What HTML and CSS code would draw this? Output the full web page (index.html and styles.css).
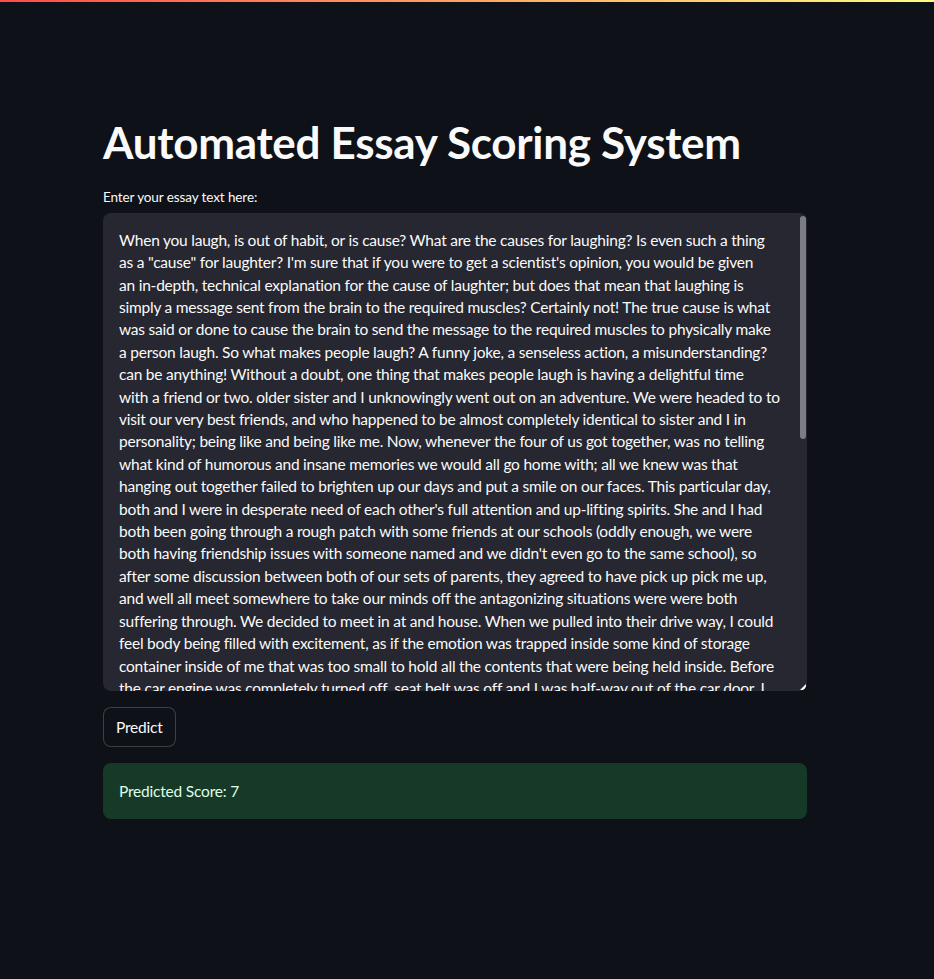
FILE: index.html
```html
<!DOCTYPE html>
<html lang="en">
<head>
<meta charset="utf-8">
<title>Automated Essay Scoring System</title>
<link rel="stylesheet" href="styles.css">
</head>
<body>
<div class="decoration"></div>
<main class="main">
  <h1 class="title">Automated Essay Scoring System</h1>
  <label class="label">Enter your essay text here:</label>
  <div class="textarea-wrap">
    <div class="textarea">
      <div>When you laugh, is out of habit, or is cause? What are the causes for laughing? Is even such a thing</div>
      <div>as a "cause" for laughter? I'm sure that if you were to get a scientist's opinion, you would be given</div>
      <div>an in-depth, technical explanation for the cause of laughter; but does that mean that laughing is</div>
      <div>simply a message sent from the brain to the required muscles? Certainly not! The true cause is what</div>
      <div>was said or done to cause the brain to send the message to the required muscles to physically make</div>
      <div>a person laugh. So what makes people laugh? A funny joke, a senseless action, a misunderstanding?</div>
      <div>can be anything! Without a doubt, one thing that makes people laugh is having a delightful time</div>
      <div>with a friend or two. older sister and I unknowingly went out on an adventure. We were headed to to</div>
      <div>visit our very best friends, and who happened to be almost completely identical to sister and I in</div>
      <div>personality; being like and being like me. Now, whenever the four of us got together, was no telling</div>
      <div>what kind of humorous and insane memories we would all go home with; all we knew was that</div>
      <div>hanging out together failed to brighten up our days and put a smile on our faces. This particular day,</div>
      <div>both and I were in desperate need of each other's full attention and up-lifting spirits. She and I had</div>
      <div>both been going through a rough patch with some friends at our schools (oddly enough, we were</div>
      <div>both having friendship issues with someone named and we didn't even go to the same school), so</div>
      <div>after some discussion between both of our sets of parents, they agreed to have pick up pick me up,</div>
      <div>and well all meet somewhere to take our minds off the antagonizing situations were were both</div>
      <div>suffering through. We decided to meet in at and house. When we pulled into their drive way, I could</div>
      <div>feel body being filled with excitement, as if the emotion was trapped inside some kind of storage</div>
      <div>container inside of me that was too small to hold all the contents that were being held inside. Before</div>
      <div>the car engine was completely turned off, seat belt was off and I was half-way out of the car door, I</div>
    </div>
    <div class="scroll-thumb"></div>
    <div class="resize-handle"></div>
  </div>
  <button class="button" type="button">Predict</button>
  <div class="alert">Predicted Score: 7</div>
</main>
</body>
</html>
```

FILE: styles.css
```css
html, body {
  margin: 0;
  padding: 0;
  background: #0e1117;
  color: #fafafa;
  font-family: "Lato", "Open Sans", sans-serif;
}

.decoration {
  height: 2px;
  background: linear-gradient(90deg, #ff4b4b, #fffd80);
}

.main {
  width: 704px;
  padding: 0 0 0 103px;
  display: flex;
  flex-direction: column;
  align-items: flex-start;
}

.title {
  margin: 114px 0 0 0;
  font-size: 44px;
  font-weight: 700;
  line-height: 1.2;
  letter-spacing: -0.3px;
}

.label {
  margin-top: 18px;
  margin-bottom: 6px;
  font-size: 13.5px;
  line-height: 20px;
  height: 20px;
  letter-spacing: -0.1px;
}

.textarea-wrap {
  position: relative;
  width: 704px;
  height: 478px;
  background: #262730;
  border-radius: 8px;
  overflow: hidden;
}

.textarea {
  height: 100%;
  box-sizing: border-box;
  padding: 16px 16px 0 16px;
  font-size: 15.5px;
  letter-spacing: -0.22px;
  line-height: 22.4px;
  white-space: nowrap;
  overflow: hidden;
}

.scroll-thumb {
  position: absolute;
  right: 1px;
  top: 3px;
  width: 6px;
  height: 223px;
  border-radius: 3px;
  background: #7b7c84;
}

.resize-handle {
  position: absolute;
  right: 1px;
  bottom: 1px;
  width: 0;
  height: 0;
  border-left: 6px solid transparent;
  border-bottom: 6px solid #fafafa;
}

.button {
  margin-top: 16px;
  height: 40px;
  padding: 0 12px;
  background: #0e1117;
  color: #fafafa;
  border: 1px solid rgba(250, 250, 250, 0.2);
  border-radius: 8px;
  font-family: inherit;
  font-size: 15.5px;
  letter-spacing: -0.2px;
}

.alert {
  margin-top: 16px;
  width: 704px;
  box-sizing: border-box;
  height: 56px;
  padding: 16px;
  background: #173928;
  color: #dffde9;
  border-radius: 8px;
  font-size: 15.5px;
  letter-spacing: -0.2px;
  line-height: 24px;
}
```
